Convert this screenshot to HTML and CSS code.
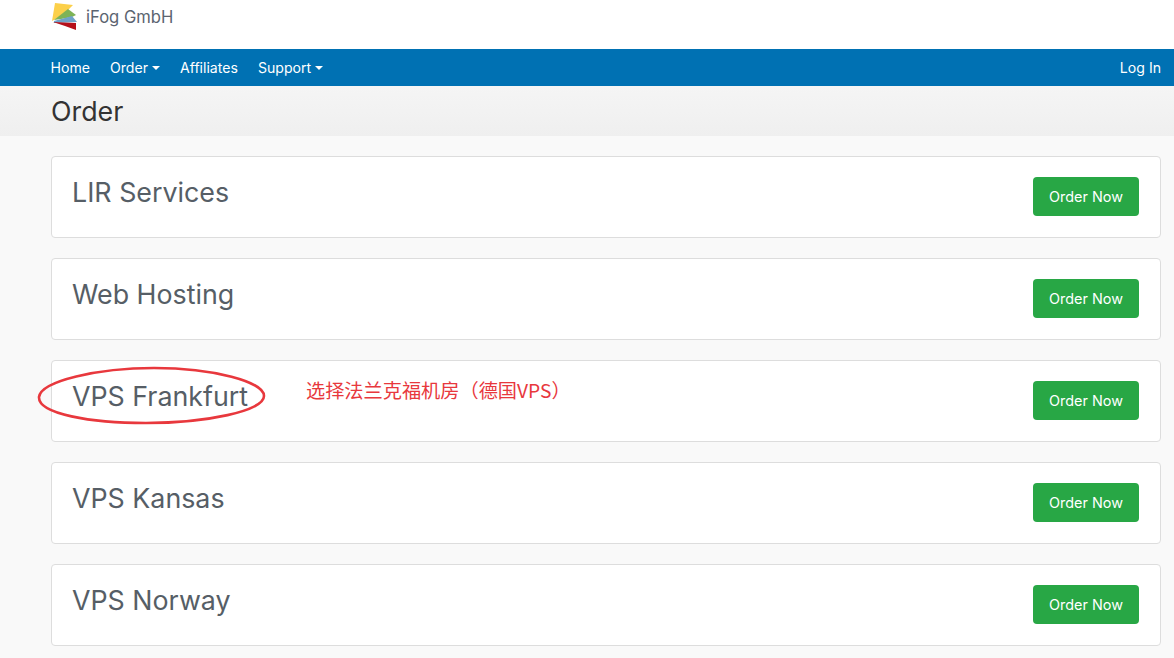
FILE: index.html
```html
<!DOCTYPE html>
<html lang="en">
<head>
<meta charset="utf-8">
<title>Order</title>
<link rel="stylesheet" href="styles.css">
</head>
<body>
<header class="brand-bar">
  <div class="brand">
    <svg class="logo" width="27" height="30" viewBox="0 0 27 30">
      <polygon points="4,1 22,3 17,8 14,12 1,19" fill="#fcd04a"/>
      <polygon points="3,18 17,7 25,13 21,15 10,17" fill="#7eb356"/>
      <polygon points="3,19 21,14 26,20 3,21" fill="#6fa3c9"/>
      <polygon points="2,20 25,21 25,28 14,24" fill="#b5101a"/>
    </svg>
    <span class="brand-name">iFog GmbH</span>
  </div>
</header>
<nav class="navbar">
  <div class="nav-links">
    <a class="nav-link">Home</a>
    <a class="nav-link caret">Order</a>
    <a class="nav-link">Affiliates</a>
    <a class="nav-link caret">Support</a>
  </div>
  <a class="nav-link">Log In</a>
</nav>
<div class="title-bar"><h1 class="page-title">Order</h1></div>
<main class="cards">
  <section class="card"><h2 class="card-title">LIR Services</h2><a class="btn">Order Now</a></section>
  <section class="card"><h2 class="card-title">Web Hosting</h2><a class="btn">Order Now</a></section>
  <section class="card"><h2 class="card-title">VPS Frankfurt</h2><a class="btn">Order Now</a></section>
  <section class="card"><h2 class="card-title">VPS Kansas</h2><a class="btn">Order Now</a></section>
  <section class="card"><h2 class="card-title">VPS Norway</h2><a class="btn">Order Now</a></section>
</main>
<svg class="circle-mark" width="234" height="64" viewBox="0 0 234 64">
  <path d="M3 33 C5 17 62 4 118 4 C178 4 228 18 228 32 C228 47 170 59 110 59 C55 59 2 50 3 33 Z" fill="none" stroke="#e8383d" stroke-width="2.6"/>
</svg>
<span class="note">选择法兰克福机房（德国VPS）</span>
</body>
</html>
```
FILE: styles.css
```css
* { box-sizing: border-box; }
html, body { margin: 0; height: 100%; overflow: hidden; }
body {
  position: relative;
  background: #f9f9f9;
  font-family: Inter, "Noto Sans", sans-serif;
  color: #212529;
}
.brand-bar {
  height: 49px;
  background: #fff;
  padding-left: 51px;
}
.brand { display: flex; align-items: flex-start; }
.logo { margin-top: 2px; flex: none; }
.brand-name {
  margin-left: 8px;
  margin-top: 6px;
  font-size: 16.6px;
  line-height: 22px;
  color: #5b6470;
}
.navbar {
  height: 37px;
  background: #0071b3;
  padding: 0 13px 0 50.5px;
  display: flex;
  align-items: center;
  justify-content: space-between;
}
.nav-links { display: flex; gap: 20px; }
.nav-link { color: #fff; font-size: 14.1px; line-height: 37px; }
.caret::after {
  content: "";
  display: inline-block;
  margin-left: 4px;
  vertical-align: 3px;
  border-top: 4.5px solid #fff;
  border-left: 4.5px solid transparent;
  border-right: 4.5px solid transparent;
}
.title-bar {
  height: 50px;
  padding-left: 51px;
  background: linear-gradient(#f5f5f5, #efefef);
  display: flex;
  align-items: center;
}
.page-title {
  margin: 0;
  font-size: 26.8px;
  font-weight: 400;
  line-height: 54px;
  color: #333;
}
.cards {
  padding: 20px 13px 0 51px;
  display: flex;
  flex-direction: column;
  gap: 20px;
}
.card {
  height: 82px;
  background: #fff;
  border: 1px solid #ddd;
  border-radius: 4px;
  padding: 20px 21px 0 20px;
  display: flex;
  align-items: flex-start;
  justify-content: space-between;
}
.card-title {
  margin: 0;
  font-size: 26.8px;
  font-weight: 400;
  line-height: 31px;
  color: #565e66;
}
.btn {
  width: 106px;
  height: 39px;
  background: #28a745;
  border-radius: 4px;
  color: #fff;
  font-size: 14.4px;
  line-height: 39px;
  text-align: center;
}
.circle-mark { position: absolute; left: 36px; top: 364px; }
.note {
  position: absolute;
  left: 306px;
  top: 378px;
  font-family: "Noto Sans CJK SC", "Noto Sans", sans-serif;
  font-size: 19.2px;
  line-height: 24px;
  color: #e8383d;
}
```
